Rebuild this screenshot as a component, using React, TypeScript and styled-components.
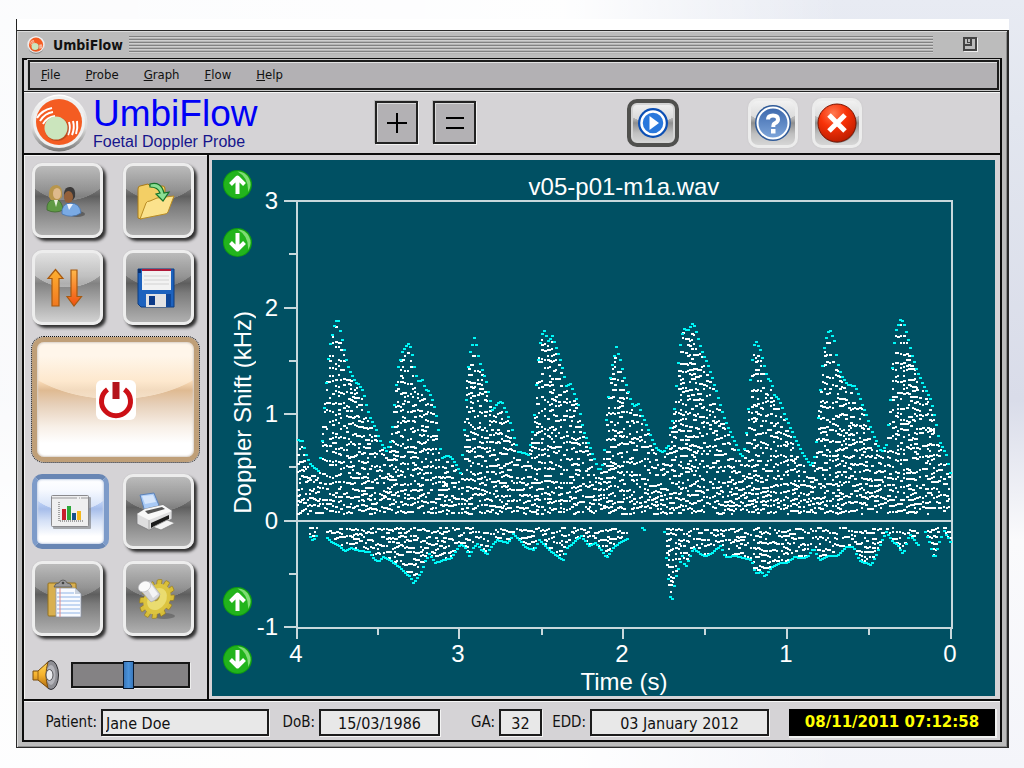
import React from "react";
import styled, { createGlobalStyle, css } from "styled-components";

const UI = '"DejaVu Sans Condensed", "DejaVu Sans", sans-serif';
const SANS = '"Liberation Sans", Arial, sans-serif';

const Global = createGlobalStyle`
  *, *::before, *::after { box-sizing: border-box; }
  body { margin: 0; font-family: ${UI}; color: #111; }
  button { padding: 0; border: 0; font: inherit; cursor: pointer; }
  svg { display: block; }
`;

/* ---------- window frame ---------- */

const Desktop = styled.div`
  min-height: 100vh;
  display: flex;
  flex-direction: column;
  padding: 19px 15px 20px 16px;
  background:
    linear-gradient(90deg, rgba(255, 255, 255, 0.85), rgba(255, 255, 255, 0.95) 55%, rgba(255, 255, 255, 0) 82%),
    linear-gradient(180deg, #e8ebf3 0, #e2e6ef 120px, #d9dce9 400px, #fafafc 540px, #f4f5fa 768px);
`;

const TopStrip = styled.div`
  height: 11px;
  background: #fff;
  border-left: 1px solid #222;
`;

const Window = styled.div`
  flex: 1;
  display: flex;
  flex-direction: column;
  border: 1px solid #2a2a2a;
  border-right-width: 2px;
  background: #bcbcbc;
  padding: 0 5px 5px;
  box-shadow: inset 1px 1px 0 #dcdcdc, inset -1px -1px 0 #8c8c8c;
`;

const TitleBar = styled.header`
  height: 27px;
  display: flex;
  align-items: center;
  padding: 0 24px 0 5px;
`;

const Title = styled.h1`
  margin: 0 6px 0 8px;
  font-size: 14px;
  font-weight: bold;
  line-height: 18px;
`;

const Grip = styled.div`
  flex: 1;
  height: 18px;
  margin-right: 30px;
  background: repeating-linear-gradient(180deg, #828282 0 1px, #cfcfcf 1px 2px, #b4b4b4 2px 3px);
`;

const Restore = styled.button`
  width: 15px;
  height: 15px;
  background: none;
`;

const Frame = styled.div`
  flex: 1;
  display: flex;
  flex-direction: column;
  border: 2px solid #0c0c0c;
  background: #d5d3d6;
`;

const MenuBar = styled.nav`
  display: flex;
  align-items: center;
  gap: 25px;
  height: 30px;
  margin: 0 1px 1px 4px;
  padding: 0 11px;
  border: 2px solid #1c1c1c;
  background: #b3b1b4;
  box-shadow: inset 0 1px 0 #e2e2e2, 0 0 0 1px #c8c8c8;
`;

const MenuItem = styled.button`
  background: none;
  font-size: 13px;
  line-height: 18px;
  color: #111;
`;

/* ---------- header ---------- */

const Header = styled.div`
  display: flex;
  align-items: center;
  height: 64px;
  padding: 0 138px 0 6px;
  border-top: 1px solid #222;
  border-bottom: 2px solid #0c0c0c;
  box-shadow: inset 0 1px 0 #f6f6f6;
`;

const Brand = styled.div`
  width: 282px;
  margin-left: 5px;
`;

const BrandName = styled.div`
  font: 37px/38px ${SANS};
  color: #0000f6;
`;

const BrandSub = styled.div`
  font: 16px/18px ${SANS};
  color: #16168c;
`;

const StepButtons = styled.div`
  display: flex;
  gap: 15px;
  margin-right: auto;
`;

const StepButton = styled.button`
  width: 43px;
  height: 43px;
  display: grid;
  place-items: center;
  background: #b3b1b4;
  border: 2px solid #222;
  box-shadow: 1px 1px 0 #f2f2f2, -1px -1px 0 #bbb, inset 1px 1px 0 #dadada;
`;

type Tone = "dark" | "light" | "blue" | "cream";

const TONES: Record<Tone, string> = {
  dark: `radial-gradient(ellipse 72% 60% at 50% -10%, rgba(255,255,255,.22) 99%, transparent 100%),
    linear-gradient(180deg, #a8a8a8 0, #767676 34%, #5e5e5e 44%, #7b7b7b 58%, #b0b0b0 100%)`,
  light: `radial-gradient(ellipse 72% 60% at 50% -10%, rgba(255,255,255,.36) 99%, transparent 100%),
    linear-gradient(180deg, #d0d0d0 0, #9c9c9c 34%, #828282 44%, #9c9c9c 62%, #d2d2d2 100%)`,
  blue: `radial-gradient(ellipse 72% 60% at 50% -10%, rgba(255,255,255,.5) 99%, transparent 100%),
    linear-gradient(180deg, #fff 0, #f0f5ff 16%, #b8cdf4 38%, #a6bdea 46%, #d4e0f6 64%, #fff 88%)`,
  cream: `radial-gradient(ellipse 72% 60% at 50% -10%, rgba(255,240,220,.6) 99%, transparent 100%),
    linear-gradient(180deg, #fff 0, #fff 12%, #fbdcb8 34%, #dfba92 42%, #e6cfb8 54%, #f8f0e8 74%, #fff 88%)`,
};

const HeaderButton = styled.button<{ $ring?: boolean; $gap: number }>`
  width: ${({ $ring }) => ($ring ? 52 : 50)}px;
  height: ${({ $ring }) => ($ring ? 48 : 50)}px;
  margin-left: ${({ $gap }) => $gap}px;
  display: grid;
  place-items: center;
  border-radius: 10px;
  border: ${({ $ring }) => ($ring ? "4px solid #50504e" : "3px solid #ececec")};
  background:
    radial-gradient(ellipse 72% 60% at 50% -10%, rgba(255, 255, 255, 0.5) 99%, transparent 100%),
    linear-gradient(180deg, #e4e4e4 0, #b4b4b4 40%, #8e8e8e 50%, #c0c0c0 75%, #d6d6d6 100%);
  box-shadow: ${({ $ring }) => ($ring ? "inset 0 0 0 2px #d4d4d4" : "0 0 2px #c4c4c4")};
`;

/* ---------- body ---------- */

const Body = styled.main`
  flex: 1;
  display: flex;
`;

const Sidebar = styled.aside`
  flex: none;
  width: 185px;
  padding: 8px 8px 9px 8px;
  border-right: 2px solid #0c0c0c;
  box-shadow: inset 1px 1px 0 #f4f4f4;
`;

const ToolGrid = styled.div`
  display: grid;
  grid-template-columns: 1fr 1fr;
  gap: 12px 14px;
`;

const ToolButton = styled.button<{ $tone?: Tone }>`
  ${({ $tone = "dark" }) => css`background: ${TONES[$tone]};`}
  width: 71px;
  height: 75px;
  padding-right: 5px;
  display: grid;
  place-items: center;
  border: 3px solid #ededed;
  border-radius: 10px;
  box-shadow: 3px 3px 3px rgba(20, 20, 20, 0.85), 0 0 1px #aaa;
`;

const ActiveTool = styled(ToolButton)`
  width: 77px;
  padding: 0;
  border: 5px solid #7d9bc9;
  border-top-color: #6886b4;
  border-bottom-color: #6886b4;
  box-shadow: inset 0 0 2px 1px #c8d4e8;
`;

const PowerButton = styled(ToolButton)`
  grid-column: 1 / -1;
  width: 100%;
  height: 125px;
  padding: 0;
  border: 5px solid #bf9f78;
  border-radius: 12px;
  outline: 1px dotted #111;
  box-shadow: inset 0 0 2px 1px #d8d0c8;
`;

const PowerBadge = styled.span`
  display: grid;
  place-items: center;
  width: 40px;
  height: 40px;
  border-radius: 6px;
  background: #fff;
`;

const Volume = styled.label`
  display: flex;
  align-items: center;
  gap: 12px;
  margin-top: 24px;
`;

const VolumeSlider = styled.input`
  appearance: none;
  flex: 1;
  min-width: 0;
  height: 26px;
  margin: 0 9px 0 0;
  border: 2px solid #161616;
  background: #848284;
  box-shadow: 1px 1px 0 #eee;

  &::-webkit-slider-thumb {
    appearance: none;
    width: 11px;
    height: 28px;
    border: 1px solid #0a1a30;
    background: linear-gradient(90deg, #3a78bc, #4a92da 50%, #3a78bc);
  }
`;

const ChartPanel = styled.section`
  flex: 1;
  min-width: 0;
  display: flex;
  margin: 5px 5px 3px 3px;
  background: #005063;
`;

const AxisColumn = styled.div`
  flex: none;
  width: 50px;
  display: flex;
  flex-direction: column;
  justify-content: space-between;
  padding: 10px 0 22px 11px;
`;

const ArrowPair = styled.div`
  display: grid;
  gap: 29px;
`;

const ArrowButton = styled.button`
  width: 29px;
  height: 29px;
  background: none;
`;

const AxisLabel = styled.div`
  writing-mode: vertical-rl;
  transform: rotate(180deg);
  margin: 0 0 20px 6px;
  font: 24px/28px ${SANS};
  color: #fff;
`;

const Plot = styled.svg`
  flex: 1;
  min-width: 0;
  width: 100%;
  overflow: visible;
  font: 24px ${SANS};
  fill: #fff;
`;

/* ---------- footer ---------- */

const Footer = styled.footer`
  display: grid;
  grid-template-columns: 77px 168fr 50px 121fr 59px 43fr 48px 179fr 20px 206fr;
  align-items: center;
  height: 41px;
  padding: 3px 5px 0 0;
  border-top: 2px solid #0c0c0c;
  box-shadow: inset 0 1px 0 #f6f6f6;
`;

const FieldLabel = styled.label`
  padding-right: 4px;
  text-align: right;
  font-size: 15px;
  line-height: 20px;
`;

const Field = styled.input<{ $left?: boolean }>`
  width: 100%;
  min-width: 0;
  height: 27px;
  padding: 2px 3px 0;
  border: 2px solid #1c1c1c;
  border-radius: 0;
  background: #e8e8e8;
  box-shadow: 1px 1px 0 #f4f4f4;
  font: 16px/20px ${UI};
  color: #111;
  text-align: ${({ $left }) => ($left ? "left" : "center")};
`;

const Clock = styled.time`
  grid-column: 10;
  height: 27px;
  background: #000;
  box-shadow: 1px 1px 0 1px #f0f0f0;
  color: #ff0;
  font: bold 15px/26px "DejaVu Sans", sans-serif;
  text-align: center;
  white-space: nowrap;
`;

/* ---------- icons ---------- */

const Logo = ({ size }: { size: number }) => (
  <svg width={size} height={size} viewBox="0 0 58 58" aria-hidden="true">
    <defs>
      <linearGradient id="rim" x1="0" y1="0" x2="0" y2="1">
        <stop offset="0" stopColor="#fff" />
        <stop offset="0.6" stopColor="#d8d8d8" />
        <stop offset="1" stopColor="#777" />
      </linearGradient>
    </defs>
    <circle cx="29" cy="29" r="28.500" fill="url(#rim)" />
    <circle cx="29" cy="28" r="26" fill="#f0f0f0" />
    <circle cx="29" cy="28" r="23" fill="#f45c22" />
    <g fill="none" stroke="#fff" strokeWidth="2">
      <path d="M7 24Q12 16 22 14M10 27Q15 19 23 18M13 30Q17 23 25 22" />
      <path d="M39 28Q41 34 38 41M43 27Q45 34 42 41M47 27Q48 34 46 40" />
    </g>
    <circle cx="27" cy="35" r="12" fill="#8a3a18" opacity="0.5" />
    <circle cx="26" cy="34" r="11.500" fill="#cbe5bd" />
  </svg>
);

const PlayIcon = () => (
  <svg width="32" height="32" viewBox="0 0 32 32" aria-hidden="true">
    <circle cx="16" cy="16" r="15" fill="#0b4fb4" />
    <circle cx="16" cy="16" r="11.500" fill="#2a78dc" stroke="#fff" strokeWidth="2.500" />
    <path d="M12.500 9L22 16L12.500 23Z" fill="#fff" />
  </svg>
);

const HelpIcon = () => (
  <svg width="38" height="38" viewBox="0 0 38 38" aria-hidden="true">
    <defs>
      <linearGradient id="helpFill" x1="0" y1="0" x2="0" y2="1">
        <stop offset="0" stopColor="#3c68ac" />
        <stop offset="1" stopColor="#7fa6da" />
      </linearGradient>
    </defs>
    <circle cx="19" cy="19" r="18" fill="#2f5a98" />
    <circle cx="19" cy="19" r="15.500" fill="url(#helpFill)" stroke="#fff" strokeWidth="2" />
    <path d="M14 15.500Q14 11.500 19 11.500Q24 11.500 24 15.500Q24 18 20.500 19.500Q19.300 20 19.300 23" fill="none" stroke="#fff" strokeWidth="4" />
    <rect x="17" y="25" width="4.500" height="4.500" fill="#fff" />
  </svg>
);

const CloseIcon = () => (
  <svg width="40" height="40" viewBox="0 0 40 40" aria-hidden="true">
    <defs>
      <radialGradient id="closeFill" cx="0.4" cy="0.25" r="0.8">
        <stop offset="0" stopColor="#ff7a52" />
        <stop offset="0.45" stopColor="#f83208" />
        <stop offset="1" stopColor="#b81c00" />
      </radialGradient>
    </defs>
    <circle cx="20.500" cy="21" r="19" fill="#444" opacity="0.5" />
    <circle cx="20" cy="20" r="19" fill="url(#closeFill)" stroke="#7c1400" />
    <path d="M12 12L28 28M28 12L12 28" stroke="#fff" strokeWidth="5" />
  </svg>
);

const UsersIcon = () => (
  <svg width="40" height="40" viewBox="0 0 40 40" aria-hidden="true">
    <ellipse cx="32" cy="33" rx="8" ry="3" fill="#333" opacity="0.5" />
    <path d="M2 29Q1 20 9 18Q17 18 18 29Q10 33 2 29Z" fill="#5f9a45" stroke="#3d6b2c" strokeWidth="0.800" />
    <path d="M9 19L11 26L13 19Z" fill="#e8f0e0" />
    <path d="M4 16Q3 4 12 4Q18 5 17 16L14 19H6Z" fill="#b8964c" />
    <ellipse cx="12" cy="12.500" rx="4" ry="5.500" fill="#dfba8c" />
    <path d="M17 33Q16 23 25 22Q35 22 36 32Q27 38 17 33Z" fill="#7aaae4" stroke="#4875ae" strokeWidth="0.800" />
    <path d="M22 23L24 29L28 23Z" fill="#f0f4fa" />
    <path d="M19 12Q20 5 26 6Q31 7 30 16L28 19H20Z" fill="#3c3a3a" />
    <ellipse cx="23.500" cy="16" rx="4.500" ry="6" fill="#94603a" />
  </svg>
);

const FolderIcon = () => (
  <svg width="42" height="40" viewBox="0 0 42 40" aria-hidden="true">
    <path d="M3 37V8Q3 5 5 5L13 3L16 6L28 5Q30 5 30 8V20L6 38Z" fill="#f3cf65" stroke="#a87a1a" />
    <path d="M5 38L11 22Q12 20 15 20L22 17L39 15L33 31Q32 33 30 33Z" fill="#fbe28c" stroke="#b98c24" />
    <path d="M15 3Q26 0 29 12L34 11L28 20L21 13L25 12Q23 6 15 6Z" fill="#8be094" stroke="#16722a" strokeWidth="1.200" />
  </svg>
);

const SwapIcon = () => (
  <svg width="40" height="40" viewBox="0 0 40 40" aria-hidden="true">
    <defs>
      <linearGradient id="upFill" x1="0" y1="0" x2="0" y2="1">
        <stop offset="0" stopColor="#ffb030" />
        <stop offset="1" stopColor="#f07820" />
      </linearGradient>
      <linearGradient id="downFill" x1="0" y1="0" x2="0" y2="1">
        <stop offset="0" stopColor="#ffb84a" />
        <stop offset="1" stopColor="#f05010" />
      </linearGradient>
    </defs>
    <path d="M10.500 1.500L18 10.500H14V38H7V10.500H3Z" fill="url(#upFill)" stroke="#a85a10" strokeWidth="1.200" />
    <path d="M26 2H32V28.500H36.500L29 38L22 28.500H26Z" fill="url(#downFill)" stroke="#a85a10" strokeWidth="1.200" />
  </svg>
);

const FloppyIcon = () => (
  <svg width="40" height="40" viewBox="0 0 40 40" aria-hidden="true">
    <path d="M2 1H38V39H5L2 36Z" fill="#1d62be" stroke="#0d3c80" />
    <rect x="2" y="1" width="3" height="4" fill="#0a2f6a" />
    <rect x="6" y="1" width="29" height="21" fill="#f2f2f2" />
    <rect x="6" y="1" width="29" height="2" fill="#b01838" />
    <path d="M8 8H33M8 12H33M8 16H33" stroke="#d2d2d2" />
    <rect x="10" y="26" width="20" height="13" fill="#e2e2e4" />
    <rect x="13" y="28" width="6" height="9" fill="#0c3a88" />
    <rect x="30" y="26" width="5" height="13" fill="#0f4698" />
  </svg>
);

const PowerIcon = () => (
  <svg width="36" height="38" viewBox="0 0 36 38" aria-hidden="true">
    <path d="M9.500 8.500A14.500 14.500 0 1 0 26.500 8.500" fill="none" stroke="#cc1016" strokeWidth="5" />
    <rect x="14.500" y="1" width="7" height="17" fill="#b4141c" />
  </svg>
);

const ChartIcon = () => (
  <svg width="40" height="34" viewBox="0 0 40 34" aria-hidden="true">
    <rect x="2" y="2" width="38" height="32" rx="1" fill="#777" opacity="0.6" />
    <rect x="0.500" y="0.500" width="37" height="31" rx="1" fill="#efeff0" stroke="#8a8a8e" />
    <path d="M1 3H37" stroke="#c4c4c6" strokeWidth="2" strokeDasharray="25 2 1 1" />
    <path d="M8 7V26H32" fill="none" stroke="#555" strokeDasharray="1 1" />
    <rect x="11" y="14" width="4" height="11" fill="#c8202c" />
    <rect x="16" y="11" width="4" height="14" fill="#2ea83a" />
    <rect x="21" y="18" width="4" height="7" fill="#16508c" />
    <rect x="26" y="16" width="4" height="9" fill="#f4b81c" />
  </svg>
);

const PrinterIcon = () => (
  <svg width="40" height="40" viewBox="0 0 40 40" aria-hidden="true">
    <path d="M4 3L18 1L24 16L9 20Z" fill="#a9caf6" stroke="#5c82b8" />
    <path d="M6 4L17 3L20 10L9 12Z" fill="#d6e6fc" />
    <path d="M1 22L9 17L27 13L36 19V27L13 38L1 32Z" fill="#dededf" stroke="#77777a" strokeWidth="0.800" />
    <path d="M1 22L9 17L27 13L36 19L13 28Z" fill="#f8f8f8" />
    <path d="M9 19L26 15L29 17L12 22Z" fill="#555" />
    <path d="M13 28V38" stroke="#aaa" />
    <path d="M15 31L33 23V27L15 36Z" fill="#1c1c1c" />
    <path d="M17 35L31 28L39 31L25 38Z" fill="#f4f4f4" stroke="#808080" strokeWidth="0.800" />
  </svg>
);

const ClipboardIcon = () => (
  <svg width="36" height="40" viewBox="0 0 36 40" aria-hidden="true">
    <rect x="1" y="4" width="28" height="33" rx="1" fill="#d9b050" stroke="#94701c" />
    <path d="M9 9H28L34 15V38H9Z" fill="#f8fafe" stroke="#8a96a8" strokeWidth="0.800" />
    <path d="M28 9V15H34Z" fill="#c8d0dc" />
    <path d="M10 14H27M10 18H33M10 22H33M10 26H33M10 30H33M10 34H33" stroke="#8fb4e6" strokeWidth="1.200" />
    <path d="M13 9V38" stroke="#e08888" />
    <path d="M7 8Q8 4 12 4Q13 1 16 1Q19 1 20 4Q24 4 25 8Z" fill="#9a9a9c" stroke="#555" strokeWidth="0.800" />
    <circle cx="16" cy="4" r="1.300" fill="#444" />
  </svg>
);

const GearIcon = () => {
  const teeth = Array.from({ length: 12 }, (_, i) => i * 30);
  return (
    <svg width="40" height="42" viewBox="0 0 40 42" aria-hidden="true">
      <ellipse cx="28" cy="38" rx="11" ry="3" fill="#333" opacity="0.35" />
      <g transform="translate(21 21) rotate(-58) scale(0.98 0.76)">
        {teeth.map((a) => (
          <rect key={a} x="-3" y="-21" width="6" height="7" rx="1" fill="#d8be38" stroke="#94781a" strokeWidth="0.700" transform={`rotate(${a})`} />
        ))}
        <circle r="16.500" fill="#dcc440" />
        <circle r="12" fill="#eadc70" />
        <circle cx="1" cy="-2" r="4" fill="#b09a34" />
      </g>
      <path d="M4 8L14 3L24 16Q23 21 15 24L5 13Z" fill="#d6d6d8" stroke="#a0a0a4" strokeWidth="0.600" />
      <path d="M9 7L14 5L22 16L17 20Z" fill="#f4f4f6" />
      <ellipse cx="8.500" cy="8.500" rx="6.500" ry="5" transform="rotate(-30 8.500 8.500)" fill="#fafafa" stroke="#b8b8bc" strokeWidth="0.600" />
    </svg>
  );
};

const SpeakerIcon = () => (
  <svg width="27" height="30" viewBox="0 0 27 30" aria-hidden="true">
    <defs>
      <linearGradient id="horn" x1="0" y1="0" x2="0" y2="1">
        <stop offset="0" stopColor="#ffd858" />
        <stop offset="0.5" stopColor="#f6b22e" />
        <stop offset="1" stopColor="#b06c10" />
      </linearGradient>
    </defs>
    <ellipse cx="19" cy="15" rx="7.500" ry="14.500" fill="#8e8e94" stroke="#2c2c30" />
    <path d="M1 11H6L16 2Q12 15 16 28L6 20H1Z" fill="url(#horn)" stroke="#7a4c0c" />
    <path d="M6 11V20" stroke="#9a6210" />
    <ellipse cx="19" cy="15" rx="4.500" ry="10" fill="#b4b4ba" />
    <ellipse cx="17.500" cy="15" rx="3.500" ry="5.500" fill="#ececf0" stroke="#55555a" />
  </svg>
);

const RoundArrow = ({ down }: { down?: boolean }) => (
  <svg width="29" height="29" viewBox="0 0 29 29" aria-hidden="true">
    <circle cx="14.500" cy="14.500" r="14.500" fill="#0f9a12" />
    <circle cx="14.500" cy="14.500" r="13.500" fill="#22b41c" />
    <path d="M14.500 1.500A13 13 0 0 1 25 22Q26 8 14.500 1.500Z" fill="#7fdc74" />
    <path
      d="M14.500 24V8M7.500 14.500L14.500 7.500L21.500 14.500"
      transform={down ? "rotate(180 14.500 14.500)" : undefined}
      fill="none"
      stroke="#fff"
      strokeWidth="4"
      strokeLinejoin="round"
    />
  </svg>
);

/* ---------- sonogram data ---------- */

type Curve = number[][];

const FORWARD: Curve = [
  [297, 440], [301, 441], [304, 452], [308, 463], [312, 467], [317, 471], [319, 458], [321, 441], [322, 420],
  [324, 395], [326, 370], [328, 348], [331, 335], [334, 321], [337, 321], [339, 331], [342, 345], [346, 365],
  [350, 374], [354, 382], [358, 385], [362, 392], [365, 405], [369, 418], [375, 430], [380, 444], [385, 451],
  [388, 445], [390, 438], [392, 415], [395, 385], [397, 367], [401, 352], [405, 346], [408, 343], [410, 350],
  [412, 360], [414, 374], [417, 381], [421, 380], [424, 389], [428, 392], [432, 402], [436, 420], [438, 440],
  [440, 458], [446, 455], [450, 458], [455, 465], [459, 473], [461, 455], [463, 430], [465, 400], [466, 375],
  [469, 352], [473, 338], [475, 345], [478, 361], [481, 370], [485, 382], [488, 397], [491, 410], [496, 404],
  [500, 401], [504, 410], [508, 419], [513, 438], [517, 452], [523, 453], [527, 455], [530, 440], [533, 415],
  [535, 385], [537, 360], [540, 335], [543, 331], [547, 341], [551, 336], [555, 348], [559, 360], [562, 372],
  [565, 386], [569, 384], [574, 396], [578, 408], [582, 430], [588, 445], [592, 457], [598, 471], [601, 465],
  [603, 450], [605, 420], [608, 385], [611, 365], [615, 347], [619, 360], [623, 378], [628, 396], [632, 406],
  [637, 404], [641, 416], [646, 427], [650, 438], [656, 450], [662, 452], [667, 446], [669, 428], [672, 418],
  [674, 400], [676, 372], [679, 345], [682, 328], [686, 331], [692, 323], [696, 335], [700, 350], [706, 363],
  [711, 378], [717, 398], [722, 416], [728, 430], [733, 441], [739, 454], [742, 457], [744, 440], [746, 425],
  [748, 392], [750, 368], [753, 345], [755, 342], [759, 350], [763, 366], [766, 378], [770, 382], [773, 395],
  [778, 400], [783, 414], [789, 428], [795, 441], [801, 453], [810, 466], [814, 454], [816, 430], [818, 405],
  [820, 375], [823, 348], [826, 333], [829, 331], [833, 341], [836, 362], [840, 375], [846, 385], [854, 386],
  [860, 402], [866, 418], [872, 435], [880, 452], [885, 445], [888, 415], [890, 385], [892, 350], [895, 330],
  [899, 320], [902, 321], [906, 336], [911, 356], [916, 372], [923, 387], [930, 401], [934, 420], [938, 441],
  [945, 455], [949, 473],
];

const REVERSE: Curve[] = [
  [[309, 537], [312, 541], [316, 534]],
  [
    [326, 538], [329, 541], [333, 543], [338, 546], [343, 551], [350, 548], [358, 551], [368, 552], [372, 558],
    [377, 562], [382, 557], [390, 561], [398, 567], [404, 573], [409, 577], [412, 583], [417, 577], [421, 570],
    [424, 561], [428, 554], [434, 563], [442, 560], [450, 558], [455, 551], [459, 544], [464, 548], [468, 556],
    [472, 548], [476, 544], [480, 550], [486, 554], [491, 545], [496, 540], [502, 542], [507, 543], [512, 534],
    [518, 540], [523, 546], [528, 549], [533, 550], [538, 540], [543, 545], [550, 552], [557, 557], [562, 560],
    [566, 548], [573, 542], [580, 536], [588, 546], [594, 543], [600, 550], [605, 558], [611, 549], [618, 543],
    [626, 539],
  ],
  [[641, 528], [644, 531]],
  [
    [663, 532], [664, 545], [666, 570], [668, 588], [670, 606], [672, 592], [674, 580], [678, 565], [681, 556],
    [684, 568], [688, 558], [692, 548], [698, 553], [704, 557], [712, 552], [719, 546], [724, 557], [734, 556],
    [742, 558], [750, 560], [754, 573], [760, 572], [764, 577], [770, 567], [778, 563], [786, 563], [793, 557],
    [800, 558], [806, 557], [812, 548], [818, 560], [828, 556], [836, 556], [845, 547], [852, 547], [858, 560],
    [864, 563], [870, 565], [875, 555], [881, 540], [885, 532], [892, 542], [897, 546], [902, 555], [906, 540],
    [909, 535], [917, 545],
  ],
  [[924, 532], [928, 542], [933, 560], [937, 545], [940, 537]],
  [[943, 531], [949, 542]],
];

const at = (curve: Curve, x: number) => {
  for (let i = 1; i < curve.length; i++) {
    const [x0, y0] = curve[i - 1];
    const [x1, y1] = curve[i];
    if (x <= x1) return y0 + ((y1 - y0) * (x - x0)) / (x1 - x0);
  }
  return curve[curve.length - 1][1];
};

const randomSource = (seed: number) => () => {
  seed = (seed + 0x6d2b79f5) | 0;
  let t = Math.imul(seed ^ (seed >>> 15), 1 | seed);
  t = (t + Math.imul(t ^ (t >>> 7), 61 | t)) ^ t;
  return ((t ^ (t >>> 14)) >>> 0) / 4294967296;
};

const dot = (x: number, y: number, w = 2) => `M${x} ${Math.round(y)}h${w}v2h-${w}z`;

/* Every column holds irregularly spaced dots; some of them continue a dot of the column before. */
const speckles = (curve: Curve, top: number, bottom: number, pitch: (y: number) => number, inside: (y: number, edge: number) => boolean, rand: () => number) => {
  let d = "";
  let previous: number[] = [];
  for (let x = curve[0][0]; x <= curve[curve.length - 1][0]; x += 2) {
    const edge = at(curve, x);
    const column = previous
      .filter(() => rand() < 0.55)
      .map((y) => y + Math.round((rand() - 0.5) * 3));
    for (let y = top + rand() * 6; y < bottom; y += pitch(y) * (0.3 + rand() * 1.4)) {
      const own = Math.round(y);
      if (column.every((c) => Math.abs(c - own) > 3)) column.push(own);
    }
    column.forEach((y) => {
      if (inside(y, edge)) d += dot(x, y, rand() < 0.4 ? 3 : 2);
    });
    previous = column.filter(() => rand() < 0.8);
    if (rand() < 0.3) x += 1;
  }
  return d;
};

const outline = (curve: Curve) => {
  let d = "";
  for (let x = curve[0][0]; x <= curve[curve.length - 1][0]; x += 2) d += dot(x, at(curve, x) - 1, 3);
  return d;
};

const rand = randomSource(41);
const speckle =
  speckles(FORWARD, 324, 514, (y) => (y > 484 ? 7 : 11), (y, edge) => y > edge + 3 && y < 514, rand) +
  REVERSE.map((c) => speckles(c, 527, 606, () => 8, (y, edge) => y < edge - 2 && y > 526, rand)).join("");
const envelope = outline(FORWARD) + REVERSE.map(outline).join("");

const Y_TICKS = [
  { y: 201, label: "3" }, { y: 254 }, { y: 308, label: "2" }, { y: 361 }, { y: 414, label: "1" },
  { y: 467 }, { y: 521, label: "0" }, { y: 574 }, { y: 627, label: "-1" },
];
const X_TICKS = [
  { x: 297, label: "4" }, { x: 378 }, { x: 459, label: "3" }, { x: 542 }, { x: 623, label: "2" },
  { x: 705 }, { x: 787, label: "1" }, { x: 869 }, { x: 951, label: "0" },
];

const Sonogram = () => (
  <Plot viewBox="262 160 733 536" role="img" aria-label="Doppler shift over time">
    <g stroke="#c8d8dc" strokeWidth="2" shapeRendering="crispEdges" fill="none">
      <path d="M297 201H952V628H297Z" />
      <path d="M297 521H952" />
      {Y_TICKS.map(({ y, label }) => <path key={y} d={`M${label ? 284 : 289} ${y}H297`} />)}
      {X_TICKS.map(({ x, label }) => <path key={x} d={`M${x} 628V${label ? 639 : 635}`} />)}
    </g>
    <path d={speckle} shapeRendering="crispEdges" />
    <path d={envelope} fill="#00f8f8" shapeRendering="crispEdges" />
    {Y_TICKS.filter((t) => t.label).map(({ y, label }) => (
      <text key={y} x="278" y={y + 8} textAnchor="end">{label}</text>
    ))}
    {X_TICKS.filter((t) => t.label).map(({ x, label }) => (
      <text key={x} x={x - 1} y="662" textAnchor="middle">{label}</text>
    ))}
    <text x="624" y="195" textAnchor="middle">v05-p01-m1a.wav</text>
    <text x="624" y="690" textAnchor="middle">Time (s)</text>
  </Plot>
);

/* ---------- application ---------- */

const MENUS = ["File", "Probe", "Graph", "Flow", "Help"];

const Arrows = ({ edge }: { edge: string }) => (
  <ArrowPair>
    <ArrowButton aria-label={`Raise ${edge} limit`}><RoundArrow /></ArrowButton>
    <ArrowButton aria-label={`Lower ${edge} limit`}><RoundArrow down /></ArrowButton>
  </ArrowPair>
);

export default function App() {
  return (
    <Desktop>
      <Global />
      <TopStrip />
      <Window>
        <TitleBar>
          <Logo size={18} />
          <Title>UmbiFlow</Title>
          <Grip />
          <Restore aria-label="Restore">
            <svg width="15" height="15" viewBox="0 0 15 15" fill="none" stroke="#444" shapeRendering="crispEdges">
              <path d="M14.500 1V14.500H1" stroke="#eee" />
              <path d="M1 1H13V13H1ZM1 8H8V1" strokeWidth="2" />
              <path d="M4.500 2V5.500H7" />
            </svg>
          </Restore>
        </TitleBar>
        <Frame>
          <MenuBar>
            {MENUS.map((m) => (
              <MenuItem key={m}><u>{m[0]}</u>{m.slice(1)}</MenuItem>
            ))}
          </MenuBar>
          <Header>
            <Logo size={58} />
            <Brand>
              <BrandName>UmbiFlow</BrandName>
              <BrandSub>Foetal Doppler Probe</BrandSub>
            </Brand>
            <StepButtons>
              <StepButton aria-label="Increase">
                <svg width="20" height="20" viewBox="0 0 20 20" stroke="#000" strokeWidth="2"><path d="M0 10H20M10 0V20" /></svg>
              </StepButton>
              <StepButton aria-label="Reset">
                <svg width="18" height="20" viewBox="0 0 18 20" stroke="#000" strokeWidth="2"><path d="M0 5H18M0 15H18" /></svg>
              </StepButton>
            </StepButtons>
            <HeaderButton $ring $gap={0} aria-label="Play"><PlayIcon /></HeaderButton>
            <HeaderButton $gap={69} aria-label="Help"><HelpIcon /></HeaderButton>
            <HeaderButton $gap={14} aria-label="Close"><CloseIcon /></HeaderButton>
          </Header>
          <Body>
            <Sidebar>
              <ToolGrid>
                <ToolButton aria-label="Patients"><UsersIcon /></ToolButton>
                <ToolButton aria-label="Open"><FolderIcon /></ToolButton>
                <ToolButton $tone="light" aria-label="Transfer"><SwapIcon /></ToolButton>
                <ToolButton aria-label="Save"><FloppyIcon /></ToolButton>
                <PowerButton $tone="cream" aria-label="Power"><PowerBadge><PowerIcon /></PowerBadge></PowerButton>
                <ActiveTool $tone="blue" aria-label="Chart"><ChartIcon /></ActiveTool>
                <ToolButton aria-label="Print"><PrinterIcon /></ToolButton>
                <ToolButton aria-label="Notes"><ClipboardIcon /></ToolButton>
                <ToolButton aria-label="Settings"><GearIcon /></ToolButton>
              </ToolGrid>
              <Volume>
                <SpeakerIcon />
                <VolumeSlider type="range" min="0" max="100" defaultValue="48" aria-label="Volume" />
              </Volume>
            </Sidebar>
            <ChartPanel>
              <AxisColumn>
                <Arrows edge="upper" />
                <AxisLabel>Doppler Shift (kHz)</AxisLabel>
                <Arrows edge="lower" />
              </AxisColumn>
              <Sonogram />
            </ChartPanel>
          </Body>
          <Footer>
            <FieldLabel htmlFor="patient">Patient:</FieldLabel>
            <Field id="patient" $left defaultValue="Jane Doe" />
            <FieldLabel htmlFor="dob">DoB:</FieldLabel>
            <Field id="dob" defaultValue="15/03/1986" />
            <FieldLabel htmlFor="ga">GA:</FieldLabel>
            <Field id="ga" defaultValue="32" />
            <FieldLabel htmlFor="edd">EDD:</FieldLabel>
            <Field id="edd" defaultValue="03 January 2012" />
            <Clock>08/11/2011 07:12:58</Clock>
          </Footer>
        </Frame>
      </Window>
    </Desktop>
  );
}
